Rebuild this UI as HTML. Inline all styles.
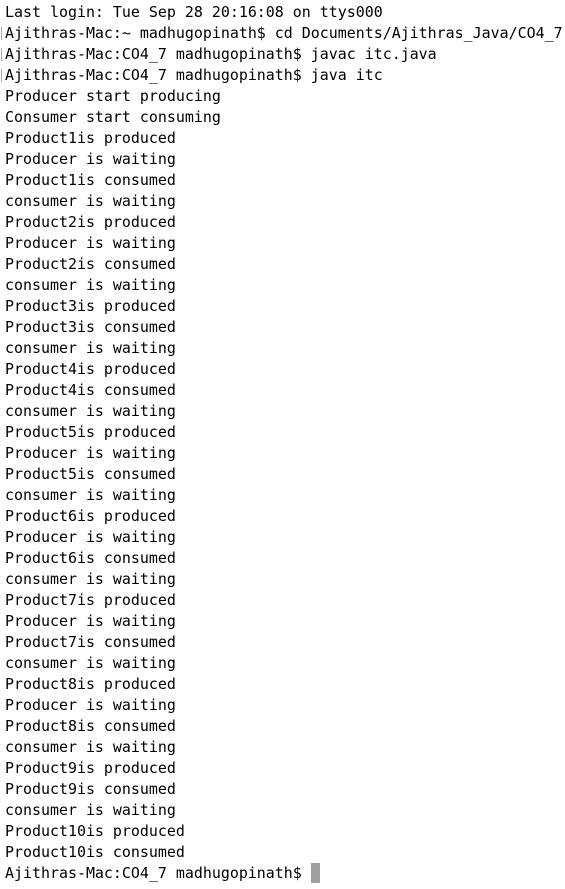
<!DOCTYPE html>
<html><head><meta charset="utf-8"><style>
html,body{margin:0;padding:0;background:#fff;width:565px;height:889px;overflow:hidden}
pre{margin:0;position:absolute;left:5px;top:2px;font-family:"DejaVu Sans Mono","Liberation Mono",monospace;font-size:14.95px;line-height:21px;color:#000}
.m{position:absolute;left:1px;width:1px;height:13px;background:#aaa}
.cur{display:inline-block;width:9px;height:20px;background:#a0a0a0;vertical-align:-5px}
</style></head><body>
<div class="m" style="top:27px"></div><div class="m" style="top:48px"></div><div class="m" style="top:69px"></div>
<pre>Last login: Tue Sep 28 20:16:08 on ttys000
Ajithras-Mac:~ madhugopinath$ cd Documents/Ajithras_Java/CO4_7
Ajithras-Mac:CO4_7 madhugopinath$ javac itc.java
Ajithras-Mac:CO4_7 madhugopinath$ java itc
Producer start producing
Consumer start consuming
Product1is produced
Producer is waiting
Product1is consumed
consumer is waiting
Product2is produced
Producer is waiting
Product2is consumed
consumer is waiting
Product3is produced
Product3is consumed
consumer is waiting
Product4is produced
Product4is consumed
consumer is waiting
Product5is produced
Producer is waiting
Product5is consumed
consumer is waiting
Product6is produced
Producer is waiting
Product6is consumed
consumer is waiting
Product7is produced
Producer is waiting
Product7is consumed
consumer is waiting
Product8is produced
Producer is waiting
Product8is consumed
consumer is waiting
Product9is produced
Product9is consumed
consumer is waiting
Product10is produced
Product10is consumed
Ajithras-Mac:CO4_7 madhugopinath$ <span class="cur"></span></pre>
</body></html>
